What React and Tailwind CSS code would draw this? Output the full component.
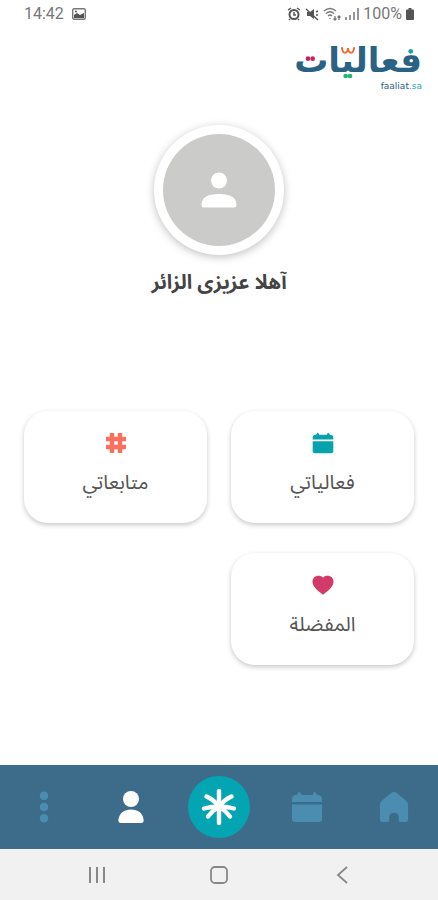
import React from 'react';

const CalendarIcon = ({ className }) => (
  <svg viewBox="0 0 32 32" className={className} fill="currentColor" aria-hidden="true">
    <path d="M1 11V8q0-4 5-4l1-2q1-2 2.500 0l1 2h11l1-2q1-2 2.500 0l1 2q5 0 5 4v3z" />
    <path d="M1 13.500h30V28q0 3-3 3H4q-3 0-3-3z" />
  </svg>
);

const HashIcon = ({ className }) => (
  <svg viewBox="0 0 22 22" className={className} fill="none" stroke="currentColor" strokeWidth="4.400" aria-hidden="true">
    <path d="M7 1v20M15 1v20M1 7h20M1 15h20" />
  </svg>
);

const HeartIcon = ({ className }) => (
  <svg viewBox="0 0 24 22" className={className} fill="currentColor" aria-hidden="true">
    <path d="M12 21.500C10 20 .5 14 .5 7.500.5 3.500 3.500 1 7 1c2 0 4 .6 5 2 1-1.400 3-2 5-2 3.500 0 6.500 2.500 6.500 6.500C23.500 14 14 20 12 21.500z" />
  </svg>
);

const HomeIcon = ({ className }) => (
  <svg viewBox="0 0 30 34" className={className} fill="currentColor" aria-hidden="true">
    <path d="M12 2q3-2 6 0l9 7.500q3 2 3 5V30q0 3-3 3h-5q-2 0-2-2v-3q0-5-5-5t-5 5v3q0 2-2 2H3q-3 0-3-3V14.500q0-3 3-5z" />
  </svg>
);

const PersonIcon = ({ className }) => (
  <svg viewBox="0 0 26 34" className={className} fill="currentColor" aria-hidden="true">
    <circle cx="13" cy="9" r="8" />
    <path d="M3 33q-3 0-2.600-3.500C1.500 23 6 19.500 13 19.500S24.500 23 25.600 29.500Q26 33 23 33z" />
  </svg>
);

const MoreIcon = ({ className }) => (
  <svg viewBox="0 0 10 34" className={className} fill="currentColor" aria-hidden="true">
    <circle cx="5" cy="5" r="4.500" />
    <circle cx="5" cy="17" r="4.500" />
    <circle cx="5" cy="29" r="4.500" />
  </svg>
);

const StarIcon = ({ className }) => (
  <svg viewBox="0 0 36 38" className={className} fill="none" stroke="currentColor" strokeWidth="4.400" strokeLinecap="round" aria-hidden="true">
    <path d="M18 3v32" />
    <path d="M5.500 8.500q7 3 12.500 10 5.500-7 12.500-10M3 20.500q7-2 15-2 8 0 15 2M7 28.500q4-5.500 11-10 7 4.500 11 10" />
    <circle cx="18" cy="19" r="4.500" fill="currentColor" stroke="none" />
  </svg>
);

const Logo = () => (
  <a href="#home" dir="rtl" className="relative block text-[#2a6283]">
    <span className="block font-['DejaVu_Sans',sans-serif] text-[34px] leading-10 font-bold">فعاليات</span>
    <svg viewBox="0 0 381 120" className="absolute top-0 left-0 h-10 w-[127px]" aria-hidden="true">
      <g fill="#c5245c">
        <circle cx="42" cy="56" r="7" />
        <circle cx="56" cy="56" r="7" />
      </g>
      <g fill="#25b575">
        <circle cx="155" cy="108" r="7" />
        <circle cx="168" cy="108" r="7" />
      </g>
      <circle cx="350" cy="34" r="7" fill="#13a3ad" />
      <path d="M144 24q1 14 9 14t9-14q1 14 9 14t9-14" fill="none" stroke="#f26a35" strokeWidth="6" strokeLinecap="round" />
    </svg>
    <span dir="ltr" className="block text-right font-['DejaVu_Sans',sans-serif] text-[9px] leading-3">
      faaliat<span className="text-[#1fa9b5]">.sa</span>
    </span>
  </a>
);

const StatusBar = () => (
  <div className="flex h-7 items-center justify-between px-6 font-[Roboto,sans-serif] text-base text-[#777777]">
    <div className="flex items-center gap-2">
      <span>14:42</span>
      <svg viewBox="0 0 14 12" className="h-3 w-3.5" aria-hidden="true">
        <rect x="0.700" y="0.700" width="12.600" height="10.600" rx="1.500" fill="none" stroke="currentColor" strokeWidth="1.400" />
        <path d="M2 10V7l3-2 3 2 4-2v5z" fill="#555555" />
        <circle cx="4" cy="3.500" r="1" fill="#555555" />
      </svg>
    </div>
    <div className="flex items-center gap-1">
      <svg viewBox="0 0 14 14" className="size-3.5" fill="none" stroke="#555555" aria-hidden="true">
        <circle cx="7" cy="7.500" r="4.500" strokeWidth="2" />
        <path d="M1 3l3-2M13 3l-3-2M7 5v3h2M3 12l-1 1M11 12l1 1" strokeWidth="1.500" />
      </svg>
      <svg viewBox="0 0 14 14" className="size-3.5" aria-hidden="true">
        <path d="M2 5h3l4-3v10L5 9H2z" fill="#555555" />
        <path d="M1 2l12 11M11 5l2-1M11 8h2" fill="none" stroke="#555555" strokeWidth="1.400" />
      </svg>
      <svg viewBox="0 0 18 14" className="h-3.5 w-4.5" fill="none" stroke="currentColor" strokeWidth="1.300" aria-hidden="true">
        <path d="M1 4q6-5 12 0M3 6.500q4-3.500 8 0M5 9q2-2 4 0M7 11v1M12 9v4M10.500 11.500l1.500 1.500 1.500-1.500M16 13V9M14.500 10.500L16 9l1.500 1.500" />
      </svg>
      <svg viewBox="0 0 14 14" className="size-3.5" fill="none" stroke="currentColor" strokeWidth="1.500" aria-hidden="true">
        <path d="M1 13v-3M5 13V8M9 13V5M13 13V1" />
      </svg>
      <span>100%</span>
      <svg viewBox="0 0 8 12" className="h-3 w-2" fill="#555555" aria-hidden="true">
        <path d="M2.500 0h3v1.500H7q1 0 1 1V11q0 1-1 1H1q-1 0-1-1V2.500q0-1 1-1h1.500z" />
      </svg>
    </div>
  </div>
);

const cards = [
  { label: 'فعالياتي', Icon: CalendarIcon, color: 'text-[#07a2ad]' },
  { label: 'متابعاتي', Icon: HashIcon, color: 'text-[#fb705c]' },
  { label: 'المفضلة', Icon: HeartIcon, color: 'text-[#d23a67]' },
];

const BottomNav = () => (
  <nav className="flex h-[84px] items-center bg-[#3d6c8b] text-[#4a8db0]">
    <button aria-label="المزيد" className="flex flex-1 justify-center">
      <MoreIcon className="h-8 w-2.5" />
    </button>
    <button aria-label="حسابي" className="flex flex-1 justify-center text-white">
      <PersonIcon className="h-8.5 w-6.5" />
    </button>
    <button aria-label="استكشف" className="flex flex-1 justify-center">
      <span className="flex size-[62px] items-center justify-center rounded-full bg-[#04a5b2] text-white">
        <StarIcon className="h-9.5 w-9" />
      </span>
    </button>
    <button aria-label="فعالياتي" className="flex flex-1 justify-center">
      <CalendarIcon className="size-8" />
    </button>
    <button aria-label="الرئيسية" className="flex flex-1 justify-center">
      <HomeIcon className="h-8 w-7.5" />
    </button>
  </nav>
);

const SystemNav = () => (
  <div className="flex h-[51px] items-center bg-[#f1f1f1] px-9 text-[#888888]">
    <button aria-label="Recents" className="flex flex-1 justify-center">
      <svg viewBox="0 0 18 18" className="size-4.5" fill="none" stroke="currentColor" strokeWidth="2">
        <path d="M2 1v16M9 1v16M16 1v16" />
      </svg>
    </button>
    <button aria-label="Home" className="flex flex-1 justify-center">
      <svg viewBox="0 0 18 18" className="size-4.5" fill="none" stroke="currentColor" strokeWidth="1.800">
        <rect x="1" y="1" width="16" height="16" rx="4" />
      </svg>
    </button>
    <button aria-label="Back" className="flex flex-1 justify-center">
      <svg viewBox="0 0 18 18" className="size-4.5" fill="none" stroke="currentColor" strokeWidth="1.800">
        <path d="M15 1L6 9l9 8" />
      </svg>
    </button>
  </div>
);

const App = () => {
  return (
    <div className="flex min-h-screen flex-col bg-white">
      <StatusBar />
      <header className="flex justify-end px-4 pt-3">
        <Logo />
      </header>

      <main dir="rtl" className="flex-1 px-6 pb-8 font-['Noto_Sans_Arabic','Noto_Kufi_Arabic',sans-serif]">
        {/* Profile */}
        <section className="flex flex-col items-center pt-[33px]">
          <div className="flex size-[130px] items-center justify-center rounded-full bg-white shadow-[0_2px_8px_rgba(0,0,0,0.25)]">
            <div className="flex size-[112px] items-center justify-center rounded-full bg-[#cbcbca] text-white">
              <svg viewBox="0 0 36 36" className="size-9" fill="currentColor" aria-hidden="true">
                <circle cx="18" cy="8.500" r="8" />
                <path d="M3 35.500q-2.500 0-2.500-2.500 0-11 17.500-11t17.500 11q0 2.500-2.500 2.500z" />
              </svg>
            </div>
          </div>
          <h1 className="mt-3 text-xl leading-8 font-bold text-[#444444]">آهلا عزيزى الزائر</h1>
        </section>

        {/* Shortcuts */}
        <section className="mt-28 grid grid-cols-2 gap-x-6 gap-y-[30px]">
          {cards.map(({ label, Icon, color }) => (
            <button
              key={label}
              className="flex h-28 flex-col items-center gap-3 rounded-3xl bg-white pt-5 shadow-[0_2px_5px_rgba(0,0,0,0.22)]"
            >
              <span className={`flex size-6 items-center justify-center ${color}`}>
                <Icon className="size-5.5" />
              </span>
              <span className="text-xl leading-8 text-[#555555]">{label}</span>
            </button>
          ))}
        </section>
      </main>

      <BottomNav />
      <SystemNav />
    </div>
  );
};

export default App;
